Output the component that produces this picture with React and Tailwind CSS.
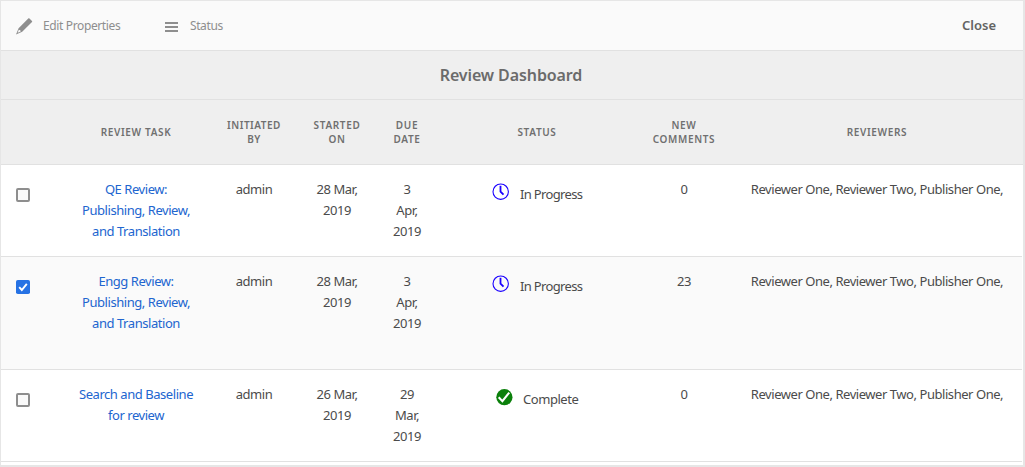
const COLS =
  "grid grid-cols-[44px_182px_54px_112px_28px_232px_62px_16px_292px]";

const rows = [
  {
    task: ["QE Review:", "Publishing, Review,", "and Translation"],
    started: "28 Mar,",
    due: ["3", "Apr,", "2019"],
    status: "In Progress",
    comments: "0",
    checked: false,
    style: "h-[92px] bg-white",
  },
  {
    task: ["Engg Review:", "Publishing, Review,", "and Translation"],
    started: "28 Mar,",
    due: ["3", "Apr,", "2019"],
    status: "In Progress",
    comments: "23",
    checked: true,
    style: "h-[113px] bg-[#fafafa]",
  },
  {
    task: ["Search and Baseline", "for review"],
    started: "26 Mar,",
    due: ["29", "Mar,", "2019"],
    status: "Complete",
    comments: "0",
    checked: false,
    style: "h-[92px] bg-white",
  },
];

function Lines({ items }) {
  return items.map((t) => (
    <span key={t} className="block">
      {t}
    </span>
  ));
}

function Checkbox({ checked }) {
  return checked ? (
    <svg width="14" height="14" viewBox="0 0 14 14" role="checkbox" aria-checked="true">
      <rect width="14" height="14" rx="1.8" fill="#2672e4" />
      <path d="M3.2 7.2 5.8 10 10.8 3.8" fill="none" stroke="#fff" strokeWidth="1.9" />
    </svg>
  ) : (
    <div
      role="checkbox"
      aria-checked="false"
      className="size-[14px] rounded-[2px] border-2 border-[#8e8e8e] bg-[#fafafa]"
    />
  );
}

function Status({ status }) {
  if (status === "Complete") {
    return (
      <div className="flex pl-[75px]">
        <svg width="17" height="17" viewBox="0 0 17 17" className="mt-[5px]">
          <circle cx="8.4" cy="8.2" r="8.1" fill="#0b800b" />
          <path d="M2.7 8.2 6.4 12.2 13.2 3.6" fill="none" stroke="#fff" strokeWidth="2.1" />
        </svg>
        <span className="ml-[10px] mt-[5px] tracking-[-0.45px]">{status}</span>
      </div>
    );
  }
  return (
    <div className="flex pl-[71px]">
      <svg width="17" height="17" viewBox="0 0 17 17" className="mt-[4px]" fill="none" stroke="#1a00ff">
        <circle cx="8.7" cy="8.7" r="7.7" strokeWidth="1.1" />
        <path d="M8.5 2.8V8.6L11.5 11.6" strokeWidth="1.8" />
      </svg>
      <span className="ml-[11px] mt-[5px] tracking-[-0.65px]">{status}</span>
    </div>
  );
}

export default function App() {
  return (
    <div className="h-[467px] w-[1025px] overflow-hidden border-t border-r-2 border-b-2 border-l border-[#e6e6e6] bg-white font-['Noto_Sans',sans-serif] text-[13px] text-[#4b4b4b]">
      <header className="flex h-[50px] items-center border-b border-[#e1e1e1] bg-[#fafafa] text-[12px] text-[#8e8e8e]">
        <svg width="17" height="17" viewBox="0 0 17 17" className="ml-[15px] mt-[2px]" fill="#8e8e8e">
          <path d="M12.5.3Q13 0 13.5.4L16 3Q16.4 3.5 16 4L6.2 13.8 0 16.4 2.6 10.2zM2.8 11.8 1.7 14.7 4.7 13.6 4.3 12.3z" fillRule="evenodd" />
        </svg>
        <span className="ml-[10px] w-[78px] whitespace-nowrap tracking-[-0.37px]">Edit Properties</span>
        <svg width="13" height="10" viewBox="0 0 13 10" className="ml-[44px] mt-[3px]" fill="#8e8e8e">
          <path d="M0 0h13v2H0zM0 4h13v2H0zM0 8h13v2H0z" />
        </svg>
        <span className="ml-[12px] tracking-[-0.4px]">Status</span>
        <button className="ml-auto mr-[27px] text-[13px] font-semibold text-[#636363]">Close</button>
      </header>
      <h1 className="flex h-[49px] items-center justify-center border-b border-[#e1e1e1] bg-[#efefef] text-[16px] font-semibold tracking-[-0.1px] text-[#6b6b6b]">
        <span className="mr-[2px]">Review Dashboard</span>
      </h1>
      <div className={`${COLS} h-[65px] items-center border-b border-[#e1e1e1] bg-[#efefef] text-center text-[10px] leading-[14px] font-semibold tracking-[0.65px] text-[#707070]`}>
        <div />
        <div>REVIEW TASK</div>
        <div className="flex flex-col items-center whitespace-nowrap tracking-[0.5px]"><Lines items={["INITIATED", "BY"]} /></div>
        <div><Lines items={["STARTED", "ON"]} /></div>
        <div className="flex flex-col items-center"><Lines items={["DUE", "DATE"]} /></div>
        <div>STATUS</div>
        <div className="flex flex-col items-center"><Lines items={["NEW", "COMMENTS"]} /></div>
        <div />
        <div>REVIEWERS</div>
      </div>
      <div className="mr-px overflow-hidden rounded-tr-[3px]">
        {rows.map((r, i) => (
          <div key={i} className={`${COLS} ${r.style} border-b border-[#e1e1e1] pt-[14px] text-center leading-[21px] tracking-[-0.45px] whitespace-nowrap`}>
            <div className="pt-[9px] pl-[15px]"><Checkbox checked={r.checked} /></div>
            <a className="text-[#2165cf]"><Lines items={r.task} /></a>
            <div>admin</div>
            <div><Lines items={[r.started, "2019"]} /></div>
            <div className="flex flex-col items-center"><Lines items={r.due} /></div>
            <Status status={r.status} />
            <div>{r.comments}</div>
            <div />
            <div>Reviewer One, Reviewer Two, Publisher One,</div>
          </div>
        ))}
      </div>
    </div>
  );
}
